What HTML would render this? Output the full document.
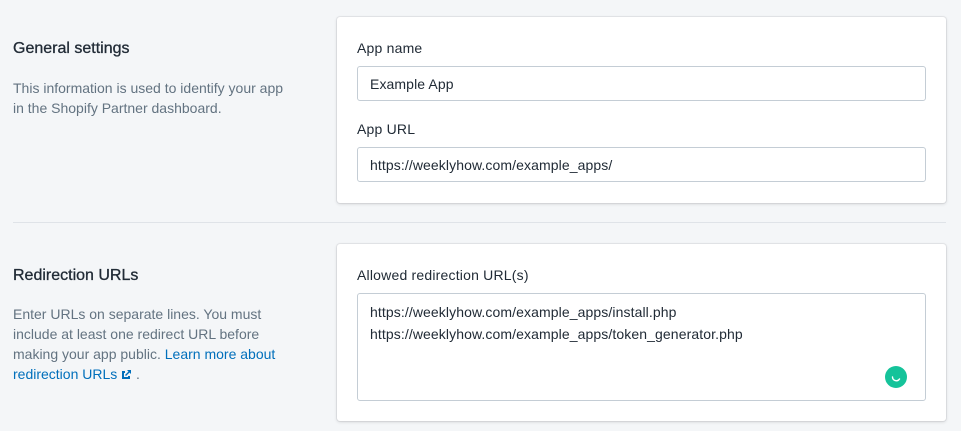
<!DOCTYPE html>
<html><head><style>
body{margin:0;width:961px;height:431px;background:#f4f6f8;font-family:"Liberation Sans",sans-serif;position:relative;overflow:hidden;color:#212b36}
.a{position:absolute}
h2{position:absolute;margin:0;font-size:16px;font-weight:normal;color:#212b36;left:13px;-webkit-text-stroke:0.3px #212b36}
.p{position:absolute;left:13px;width:320px;font-size:14px;line-height:20px;color:#637381;white-space:nowrap}
.card{position:absolute;left:337px;width:609px;background:#fff;border-radius:3px;box-shadow:0 0 0 1px rgba(63,63,68,.07),0 1px 3px rgba(63,63,68,.18)}
.lbl{position:absolute;left:20px;font-size:14px;color:#212b36;letter-spacing:0.2px}
.in{position:absolute;left:20px;border:1px solid #c4cdd5;border-radius:3px;font-size:14px;line-height:34px;padding-left:12px;box-sizing:border-box;width:569px;color:#212b36;letter-spacing:0.1px}
a{color:#006fbb;text-decoration:none}
</style></head><body>
<h2 style="top:40px">General settings</h2>
<div class="p" style="top:78px">This information is used to identify your app<br>in the Shopify Partner dashboard.</div>
<div class="card" style="top:17px;height:186px">
<div class="lbl" style="top:23px">App name</div>
<div class="in" style="top:49px;height:35px">Example App</div>
<div class="lbl" style="top:104px">App URL</div>
<div class="in" style="top:130px;height:35px">https://weeklyhow.com/example_apps/</div>
</div>
<div class="a" style="left:13px;top:222px;width:933px;height:1px;background:#dfe3e8"></div>
<h2 style="top:267px">Redirection URLs</h2>
<div class="p" style="top:304px">Enter URLs on separate lines. You must<br>include at least one redirect URL before<br>making your app public. <a>Learn more about</a><br><a>redirection URLs <svg width="11" height="11" viewBox="0 0 11 11" style="vertical-align:-1px"><path d="M1 2h3v2H3v4h4V7h2v3H1z M6 1h4v4L8.5 3.5 5 7 4 6l3.5-3.5z" fill="#006fbb"/></svg></a> .</div>
<div class="card" style="top:244px;height:177px">
<div class="lbl" style="top:23px">Allowed redirection URL(s)</div>
<div class="in" style="top:49px;height:108px;line-height:22px;padding-top:7px">https://weeklyhow.com/example_apps/install.php<br>https://weeklyhow.com/example_apps/token_generator.php</div>
</div>
<div class="a" style="left:885px;top:366px;width:22px;height:22px;border-radius:50%;background:#15c39a"></div>
<svg class="a" style="left:885px;top:366px" width="22" height="22"><path d="M7.5 11a3.8 3.8 0 0 0 7 2" stroke="#fff" stroke-width="1.4" fill="none" stroke-linecap="round"/></svg>
</body></html>
